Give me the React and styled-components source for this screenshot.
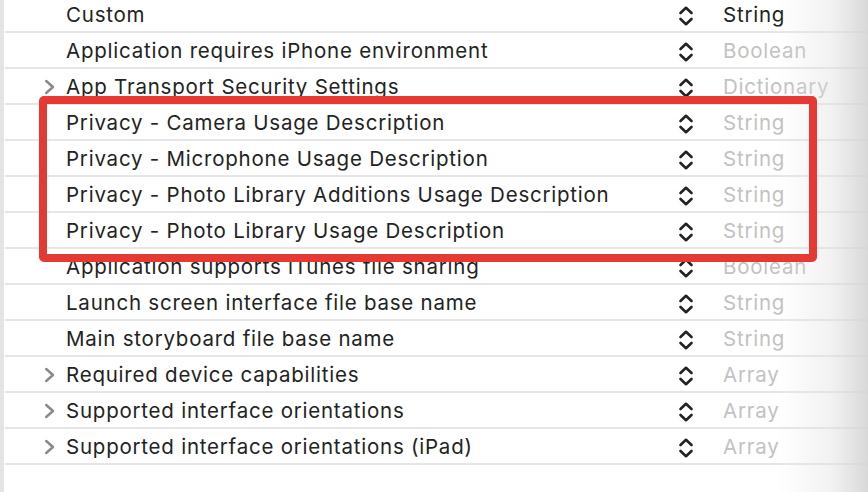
import React from "react";
import styled, { createGlobalStyle } from "styled-components";

const GlobalStyle = createGlobalStyle`
  html, body {
    margin: 0;
    padding: 0;
    background: #ffffff;
    overflow: hidden;
  }
  body {
    font-family: "Inter", "Liberation Sans", sans-serif;
  }
`;

const rows = [
  { key: "Custom", type: "String", strong: true },
  { key: "Application requires iPhone environment", type: "Boolean" },
  { key: "App Transport Security Settings", type: "Dictionary", expand: true },
  { key: "Privacy - Camera Usage Description", type: "String" },
  { key: "Privacy - Microphone Usage Description", type: "String" },
  { key: "Privacy - Photo Library Additions Usage Description", type: "String" },
  { key: "Privacy - Photo Library Usage Description", type: "String" },
  { key: "Application supports iTunes file sharing", type: "Boolean" },
  { key: "Launch screen interface file base name", type: "String" },
  { key: "Main storyboard file base name", type: "String" },
  { key: "Required device capabilities", type: "Array", expand: true },
  { key: "Supported interface orientations", type: "Array", expand: true },
  { key: "Supported interface orientations (iPad)", type: "Array", expand: true },
];

function UpDown() {
  return (
    <svg width="16" height="24" viewBox="0 0 16 24" fill="none">
      <path
        d="M2.5 9 L8 3.8 L13.5 9"
        stroke="#222"
        strokeWidth="2.6"
        strokeLinecap="round"
        strokeLinejoin="round"
      />
      <path
        d="M2.5 15 L8 20.2 L13.5 15"
        stroke="#222"
        strokeWidth="2.6"
        strokeLinecap="round"
        strokeLinejoin="round"
      />
    </svg>
  );
}

function Disclosure() {
  return (
    <svg width="12" height="18" viewBox="0 0 12 18" fill="none">
      <path
        d="M2.2 3 L9 9 L2.2 15"
        stroke="#8a8a8a"
        strokeWidth="2.5"
        strokeLinecap="round"
        strokeLinejoin="round"
      />
    </svg>
  );
}

export default function App() {
  return (
    <Page>
      <GlobalStyle />
      <Gutter />
      <Editor>
        <List>
          {rows.map((r) => (
            <Row key={r.key}>
              <Toggle>{r.expand && <Disclosure />}</Toggle>
              <Key>{r.key}</Key>
              <Stepper>
                <UpDown />
              </Stepper>
              <Type $strong={r.strong}>{r.type}</Type>
            </Row>
          ))}
        </List>
        <EdgeShade />
        <Highlight />
      </Editor>
    </Page>
  );
}

const Page = styled.div`
  display: flex;
  width: 868px;
  height: 492px;
  overflow: hidden;
  background: #fff;
`;

const Gutter = styled.div`
  width: 4px;
  flex: none;
  background: #e4e4e6;
`;

const Editor = styled.div`
  position: relative;
  flex: 1;
  padding-left: 1px;
  overflow: hidden;
`;

const List = styled.div`
  display: flex;
  flex-direction: column;
  margin-top: -3px;
`;

const Row = styled.div`
  display: flex;
  align-items: center;
  height: 34px;
  border-bottom: 2px solid #e6e6e6;
`;

const Toggle = styled.div`
  width: 61px;
  flex: none;
  display: flex;
  justify-content: flex-end;
  padding-right: 10px;
  padding-top: 1px;
  box-sizing: border-box;
`;

const Key = styled.div`
  flex: 1;
  font-size: 20.5px;
  color: #232323;
  white-space: nowrap;
  letter-spacing: 0.77px;
`;

const Stepper = styled.div`
  width: 45px;
  flex: none;
  display: flex;
  align-items: center;
  margin-left: -2px;
  padding-top: 3px;
`;

const Type = styled.div`
  width: 145px;
  flex: none;
  font-size: 20.5px;
  letter-spacing: 0.77px;
  white-space: nowrap;
  color: ${({ $strong }) => ($strong ? "#232323" : "#c2c2c2")};
`;

const Highlight = styled.div`
  position: absolute;
  left: 35px;
  top: 96px;
  width: 778px;
  height: 166px;
  box-sizing: border-box;
  border: 8px solid #e43a33;
  border-radius: 5px;
  pointer-events: none;
`;

const EdgeShade = styled.div`
  position: absolute;
  top: 0;
  right: 0;
  bottom: 0;
  width: 90px;
  background: linear-gradient(
    to right,
    rgba(225, 225, 225, 0) 0%,
    rgba(225, 225, 225, 0.45) 60%,
    rgba(212, 212, 212, 0.9) 100%
  );
  pointer-events: none;
`;
